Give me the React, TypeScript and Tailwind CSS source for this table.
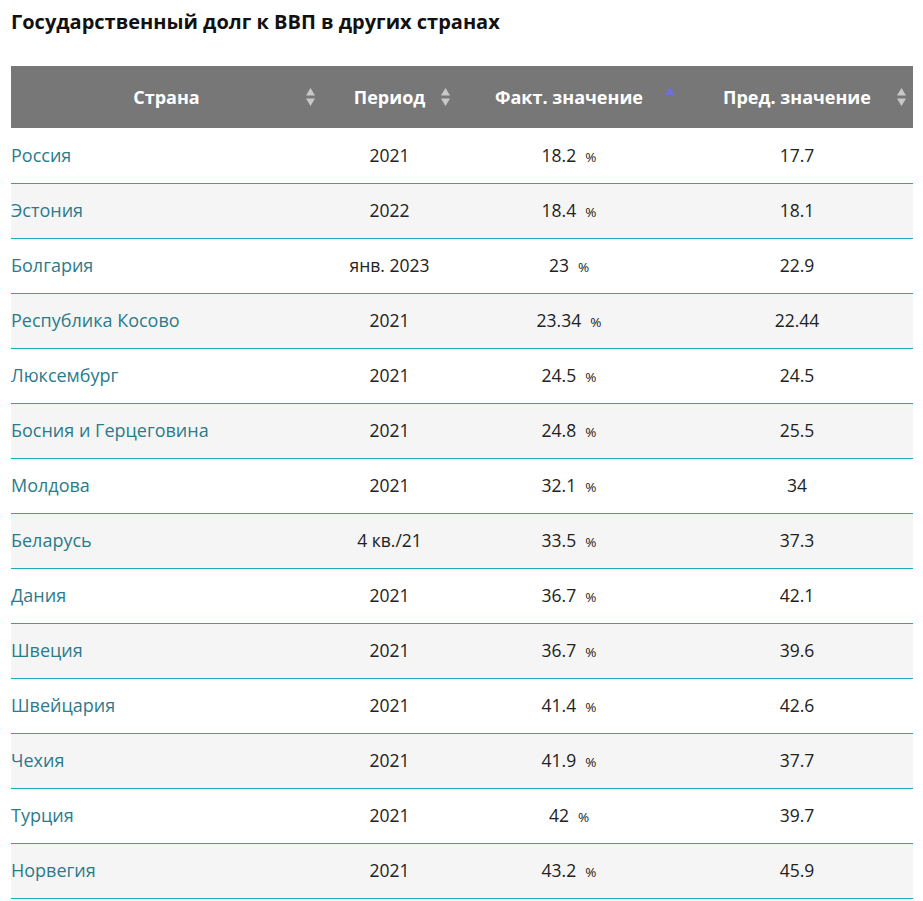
const rows: [string, string, string, string][] = [
  ["Россия", "2021", "18.2", "17.7"],
  ["Эстония", "2022", "18.4", "18.1"],
  ["Болгария", "янв. 2023", "23", "22.9"],
  ["Республика Косово", "2021", "23.34", "22.44"],
  ["Люксембург", "2021", "24.5", "24.5"],
  ["Босния и Герцеговина", "2021", "24.8", "25.5"],
  ["Молдова", "2021", "32.1", "34"],
  ["Беларусь", "4 кв./21", "33.5", "37.3"],
  ["Дания", "2021", "36.7", "42.1"],
  ["Швеция", "2021", "36.7", "39.6"],
  ["Швейцария", "2021", "41.4", "42.6"],
  ["Чехия", "2021", "41.9", "37.7"],
  ["Турция", "2021", "42", "39.7"],
  ["Норвегия", "2021", "43.2", "45.9"],
];

const SortBoth = () => (
  <svg width="11" height="20" viewBox="0 0 11 20" className="absolute right-[6px] top-1/2 -translate-y-1/2">
    <path d="M5.5 1 L10 8.5 L1 8.5 Z" fill="#c8c8c8" />
    <path d="M5.5 19 L10 11.5 L1 11.5 Z" fill="#c8c8c8" />
  </svg>
);

const SortAsc = () => (
  <svg width="12" height="20" viewBox="0 0 12 20" className="absolute right-[5px] top-1/2 -translate-y-1/2">
    <path d="M6 0 L11 8 L1 8 Z" fill="#6f6fe0" />
  </svg>
);

const App = () => {
  return (
    <div className="min-h-screen bg-white font-['Open_Sans',sans-serif] px-[11px] pt-[8px]">
      <h2 className="text-[20px] font-bold text-[#111] leading-[28px]">
        Государственный долг к ВВП в других странах
      </h2>
      <table className="mt-[30px] w-[902px] border-collapse">
        <thead>
          <tr className="bg-[#777777] text-white text-[18px] font-bold h-[62px]">
            <th className="relative w-[311px] text-center">
              Страна
              <SortBoth />
            </th>
            <th className="relative w-[135px] text-center">
              Период
              <SortBoth />
            </th>
            <th className="relative w-[224px] text-center">
              Факт. значение
              <SortAsc />
            </th>
            <th className="relative w-[232px] text-center">
              Пред. значение
              <SortBoth />
            </th>
          </tr>
        </thead>
        <tbody>
          {rows.map(([country, period, fact, prev], i) => (
            <tr
              key={country}
              className={`h-[55px] border-b border-[#1aafb6] text-[17.5px] text-[#222] ${
                i % 2 === 1 ? "bg-[#f5f5f5]" : "bg-white"
              }`}
            >
              <td className="text-left text-[18px] text-[#2b7b8b]">{country}</td>
              <td className="text-center">{period}</td>
              <td className="text-center">
                {fact}
                <span className="ml-[9px] text-[13.5px]">%</span>
              </td>
              <td className="text-center">{prev}</td>
            </tr>
          ))}
        </tbody>
      </table>
    </div>
  );
};

export default App;
